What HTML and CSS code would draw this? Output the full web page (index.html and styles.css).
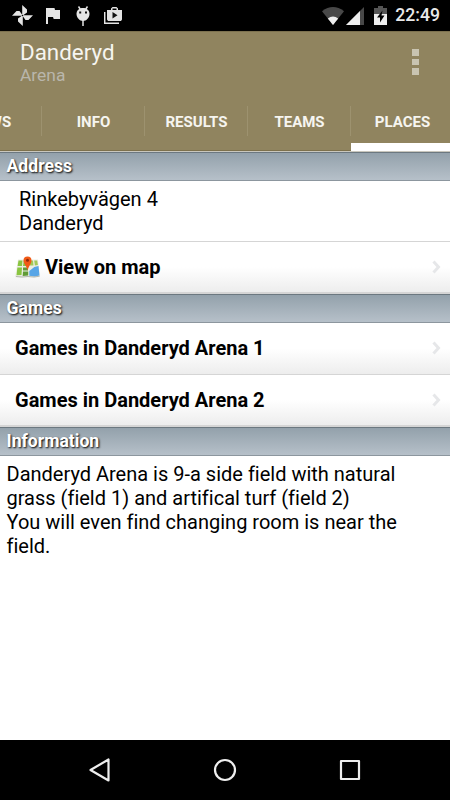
FILE: index.html
```html
<!DOCTYPE html>
<html lang="en">
<head>
  <meta charset="UTF-8">
  <meta name="viewport" content="width=device-width, initial-scale=1.0">
  <title>Danderyd Arena</title>
  <link rel="stylesheet" href="styles.css">
</head>
<body>
  <div class="status-bar">
    <div class="notifications">
      <svg width="21" height="21" viewBox="0 0 21 21" fill="#e4e4e4">
        <path d="M10.200 10V0L15 4.500V7.500L11.500 10zM11 10.200H21L16.500 15H13.500L11 11.500zM10.800 11V21L6 16.500V13.500L9.500 11zM10 10.800H0L4.500 6H7.500L10 9.500z"/>
      </svg>
      <svg width="14" height="16" viewBox="0 0 14 16" fill="#e4e4e4">
        <path d="M0 0h8.500l.5 2h5v9H7.700L7 9H2v7H0z"/>
      </svg>
      <svg width="14" height="20" viewBox="0 0 14 20">
        <path d="M2.500.5l2 3M11.500.5l-2 3M7 13v7" stroke="#e4e4e4" stroke-width="1.500"/>
        <path d="M.5 8C.5 4.500 3 2 7 2s6.500 2.500 6.500 6-3 7-6.500 7S.5 11.500.5 8z" fill="#e4e4e4"/>
        <path d="M3.200 5.500h2v2h-2zM9 5.500h2v2H9z" fill="#111"/>
      </svg>
      <svg width="18" height="17" viewBox="0 0 18 17">
        <path d="M.7 5v11.300H15" fill="none" stroke="#e4e4e4" stroke-width="1.500"/>
        <path d="M3 3h4V1.500L8.500 0h4L14 1.500V3h4v9.500L17 14H4l-1-1.500zM8.500 1.500V3h4V1.500z" fill="#e4e4e4" fill-rule="evenodd"/>
        <path d="M8.500 5l5 3.200-5 3.300z" fill="#111"/>
      </svg>
    </div>
    <div class="system">
      <svg class="wifi" width="22" height="18" viewBox="0 0 22 18">
        <path d="M0 4.200Q11-4 22 4.200L11 18z" fill="#484848"/>
        <path d="M5.800 11.500Q11 7.500 16.200 11.500L11 18z" fill="#eee"/>
      </svg>
      <svg class="signal" width="18" height="18" viewBox="0 0 18 18">
        <path d="M18 0v18H0z" fill="#484848"/>
        <path d="M14 4v14H0z" fill="#eee"/>
      </svg>
      <svg class="battery" width="13" height="19" viewBox="0 0 13 19">
        <path d="M0 2h4V0h5v2h4v6H0z" fill="#555"/>
        <path d="M0 8h13v11H0z" fill="#eee"/>
        <path d="M8.500 4.500L3 11.500h3V16.500L10.500 9.500h-3z" fill="#000"/>
      </svg>
      <span class="clock">22:49</span>
    </div>
  </div>

  <header class="header">
    <div class="title-row">
      <div>
        <h1>Danderyd</h1>
        <p class="subtitle">Arena</p>
      </div>
      <div class="menu"><i></i><i></i><i></i></div>
    </div>
    <nav class="tabs">
      <span class="tab">NEWS</span>
      <span class="tab">INFO</span>
      <span class="tab">RESULTS</span>
      <span class="tab">TEAMS</span>
      <span class="tab active">PLACES</span>
    </nav>
  </header>

  <main class="content">
    <h2>Address</h2>
    <p class="address">Rinkebyvägen 4<br>Danderyd</p>
    <div class="row last">
      <svg class="map-icon" width="25" height="22" viewBox="0 0 25 22">
        <path d="M3 3.500h20L25 21l-6 .8-6-.6-6 .6-7-.6z" fill="#eceee4"/>
        <path d="M3.500 4.500h4L7 10H2.600zM8.700 4.500H13V10H8zM2.400 11.500H7L6.500 19l-5 .3z" fill="#8ac541"/>
        <path d="M14.500 4.500H18l.5 5h-4zM19.200 4.500h3l.7 4.500-3 .5z" fill="#a3ca58"/>
        <path d="M8 15.500h5.200v4L7.700 20zM8 11.500h5v3H8z" fill="#609b36"/>
        <path d="M14.300 15l5-4 4.200-1 1 9.500-5 1-5.200-.7z" fill="#57a5e6"/>
        <path d="M1 20.500l6 .5 6-.5 6 .5 5.500-.8" fill="none" stroke="#a5aaa4" stroke-width=".8"/>
        <path d="M12.500 15C12.500 11 8.500 8 8.500 4.500a4 4 0 0 1 8 0C16.500 8 13 11 12.500 15z" fill="#f15a16"/>
        <circle cx="12.500" cy="4.300" r="1.500" fill="#8e2b0c"/>
      </svg>
      <span>View on map</span>
      <svg class="arrow" width="9" height="14" viewBox="0 0 9 14"><path d="M1.500 1.500L6.500 7l-5 5.500"/></svg>
    </div>
    <h2>Games</h2>
    <div class="row game">
      <span>Games in Danderyd Arena 1</span>
      <svg class="arrow" width="9" height="14" viewBox="0 0 9 14"><path d="M1.500 1.500L6.500 7l-5 5.500"/></svg>
    </div>
    <div class="row game last">
      <span>Games in Danderyd Arena 2</span>
      <svg class="arrow" width="9" height="14" viewBox="0 0 9 14"><path d="M1.500 1.500L6.500 7l-5 5.500"/></svg>
    </div>
    <h2>Information</h2>
    <p class="information">Danderyd Arena is 9-a side field with natural<br>grass (field 1) and artifical turf (field 2)<br>You will even find changing room is near the<br>field.</p>
  </main>

  <footer class="nav-bar">
    <svg width="24" height="26" viewBox="0 0 24 26"><path d="M20.500 2.500v21L2.500 13z"/></svg>
    <svg width="24" height="26" viewBox="0 0 24 26"><circle cx="12" cy="13" r="10"/></svg>
    <svg width="24" height="26" viewBox="0 0 24 26"><rect x="3" y="4" width="18" height="18"/></svg>
  </footer>
</body>
</html>
```
FILE: styles.css
```css
* {
  box-sizing: border-box;
}

body {
  display: flex;
  flex-direction: column;
  height: 800px;
  margin: 0;
  overflow: hidden;
  background-color: #fff;
  color: #000;
  font-family: Roboto, sans-serif;
  font-variant-ligatures: none;
}

h1,
h2,
p {
  margin: 0;
}

svg {
  flex-shrink: 0;
}

.status-bar {
  display: flex;
  justify-content: space-between;
  height: 31px;
  padding: 0 10px 0 12px;
  background-color: #000;
}

.notifications,
.system {
  display: flex;
  align-items: center;
}

.notifications {
  gap: 13px;
}

.notifications svg:nth-child(3) {
  margin-left: 3px;
}

.notifications svg:nth-child(4) {
  margin-left: 1px;
}

.signal {
  margin-left: 2px;
}

.battery {
  margin: 0 8px 0 10px;
}

.clock {
  color: #e9e9e9;
  font-size: 17.6px;
  font-weight: 500;
  line-height: 33px;
}

.header {
  height: 121px;
  background-color: #90845f;
  border-top: 1px solid #7c714f;
  border-bottom: 1px solid #c9c7bd;
  color: #f6f5f0;
}

.title-row {
  display: flex;
  justify-content: space-between;
  height: 60px;
  padding: 6px 31px 0 20px;
}

h1 {
  font-size: 22.4px;
  font-weight: 400;
  line-height: 28px;
}

.subtitle {
  color: #b9b6ac;
  font-size: 17.4px;
  line-height: 18px;
}

.menu {
  display: flex;
  flex-direction: column;
  gap: 3px;
  padding-top: 11px;
}

.menu i {
  width: 7px;
  height: 6.5px;
  background-color: #c9c4b1;
}

.tabs {
  display: grid;
  grid-template-columns: repeat(5, 103px);
  grid-template-rows: 59px;
  width: 515px;
  margin-left: -61px;
  background: linear-gradient(#7d714d, #7d714d) bottom / 100% 1px no-repeat;
}

.tab {
  padding-top: 20px;
  font-size: 15px;
  font-weight: 700;
  line-height: 20px;
  text-align: center;
  background: linear-gradient(#9d926f, #9d926f) right 14px / 1px 30px no-repeat;
}

.tab.active {
  background: none;
  border-bottom: 8px solid #fff;
}

.content {
  flex: 1;
}

h2 {
  height: 29px;
  padding-left: 6.5px;
  background-image: linear-gradient(#93a1ab, #b6c0c9);
  border-top: 1px solid #6c7880;
  border-bottom: 1px solid #8c969e;
  color: #fff;
  font-size: 17.6px;
  font-weight: 700;
  line-height: 26px;
  text-shadow: 1px 1px 2px #000;
}

.address {
  height: 61px;
  padding: 6px 19px 0;
  border-bottom: 1px solid #d5d5d5;
  font-size: 20px;
  line-height: 24px;
}

.row {
  display: flex;
  align-items: center;
  height: 52px;
  padding: 0 9px 0 15px;
  background-image: linear-gradient(#fff 50%, #ededed);
  border-bottom: 1px solid #d5d5d5;
  font-size: 20px;
  font-weight: 700;
}

.row.last {
  border-bottom-width: 2px;
}

.row.game {
  padding-bottom: 1px;
}

.map-icon {
  margin-right: 5px;
}

.arrow {
  margin-left: auto;
  fill: none;
  stroke: #e6e7e9;
  stroke-width: 3;
}

.information {
  padding: 6px 6.5px;
  font-size: 20px;
  line-height: 24px;
}

.nav-bar {
  display: flex;
  justify-content: space-between;
  height: 60px;
  padding: 17px 88px;
  background-color: #000;
}

.nav-bar svg {
  fill: none;
  stroke: #eee;
  stroke-width: 2.2;
  stroke-linejoin: round;
}
```
